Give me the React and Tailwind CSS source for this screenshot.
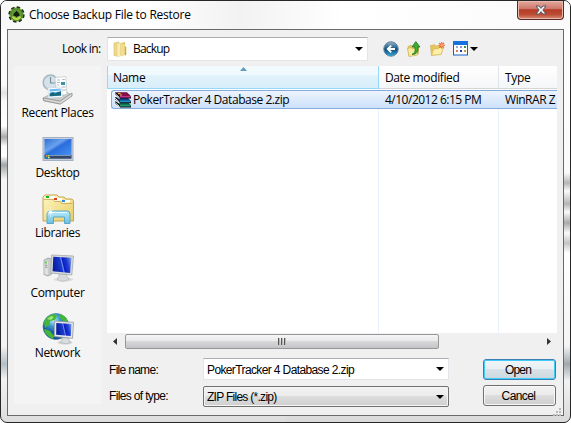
import React from "react";

const UI = "font-['Open_Sans','Noto_Sans',sans-serif]";
const SANS = "font-['Liberation_Sans',Arial,sans-serif]";

function AppIcon() {
  return (
    <svg width="17" height="17" viewBox="0 0 17 17">
      <circle cx="8.5" cy="8.5" r="7.3" fill="#8cc63f" />
      <circle cx="8.5" cy="8.5" r="7.3" fill="none" stroke="#24331f" strokeWidth="1.800" strokeDasharray="3.4 2.333" />
      <circle cx="8.5" cy="8.5" r="5.8" fill="#5f9a34" stroke="#35512a" strokeWidth=".6" />
      <path d="M3.600 10.500a5.200 5.200 0 0 0 9.800 0z" fill="#b5e04a" />
      <path d="M8.500 4.500C7.700 6.200 5.400 7 5.400 8.900c0 1.500 1.700 1.700 2.500.8L7.300 11.500h2.400l-.6-1.800c.8.900 2.500.7 2.500-.8C11.600 7 9.300 6.200 8.500 4.500z" fill="#14200e" />
    </svg>
  );
}

function FolderIcon() {
  return (
    <svg width="14" height="17" viewBox="0 0 14 17">
      <path d="M1 2l5-1v14.500l-5-1z" fill="#edd88a" stroke="#d8c06a" strokeWidth=".6" />
      <path d="M6 2.500l6-1.500v13l-6 1z" fill="#e3c765" />
      <path d="M4.500 3l3-1v13.500l-3 .5z" fill="#f8ebb4" />
      <path d="M8 3h3.500v11L8 15.500z" fill="#f1dc91" />
      <path d="M12 5l1.300 1v8l-1.300.5z" fill="#d1ae4c" />
      <path d="M12 11h1v2.500h-1z" fill="#6fb5d6" />
    </svg>
  );
}

function BackIcon() {
  return (
    <svg width="16" height="16" viewBox="0 0 16 16">
      <defs>
        <linearGradient id="back" x1="0" y1="0" x2="0" y2="1">
          <stop offset="0" stopColor="#9fb6c6" />
          <stop offset=".4" stopColor="#28668f" />
          <stop offset=".55" stopColor="#134f80" />
          <stop offset="1" stopColor="#31aee2" />
        </linearGradient>
      </defs>
      <circle cx="8" cy="8" r="7.200" fill="url(#back)" stroke="#5b7f9d" strokeWidth="1" />
      <path d="M12 8H5M8.200 4.600L4.800 8l3.400 3.400" fill="none" stroke="#fff" strokeWidth="1.900" />
    </svg>
  );
}

function UpIcon() {
  return (
    <svg width="16" height="16" viewBox="0 0 16 16">
      <path d="M2 5.500l3-1.300 1 1 6.500-.7v8l-9.500 2.500z" fill="#e9cd6a" stroke="#c3a040" strokeWidth=".6" />
      <path d="M1.500 7.500L5 6.700l1.500 1 5.500-.7-.5 7L3 15.500z" fill="#fbeb9e" stroke="#d0ae48" strokeWidth=".7" />
      <path d="M6 13.300c3-.9 3.300-3.800 3-7.300H6L9.800.600 14 6h-2.200c.6 4.600-1 7.600-5.800 7.300z" fill="#3fae33" stroke="#1c7424" strokeWidth=".8" />
    </svg>
  );
}

function NewFolderIcon() {
  return (
    <svg width="17" height="16" viewBox="0 0 17 16">
      <path d="M1.500 4.500l4-.8 1.300 1.300 5.200-.5.500 8-10 1.800z" fill="#e6c861" stroke="#cda945" strokeWidth=".6" />
      <path d="M2.500 14.300L4.500 8l5-.5 1-1 4 .4-2.500 6.600z" fill="#fdf0ac" stroke="#d8b44c" strokeWidth=".8" />
      <path d="M12.700 1v6.600M9.400 4.300H16M10.300 2l4.700 4.700M15 2l-4.700 4.700" stroke="#ee5f38" strokeWidth="1.100" />
      <circle cx="12.700" cy="4.300" r="1.300" fill="#ffae5f" />
    </svg>
  );
}

function ViewIcon() {
  return (
    <svg width="15" height="15" viewBox="0 0 15 15">
      <rect x=".5" y=".5" width="14" height="13.500" fill="#fff" stroke="#0f62c8" />
      <rect width="15" height="4" fill="#1670dd" />
      <path d="M3 5h2v2H3z" fill="#a8a9bd" />
      <path d="M7 5h2v2H7z" fill="#8d91cf" />
      <path d="M11 5h2v2h-2z" fill="#3a8f4c" />
      <path d="M3 9h2v2H3z" fill="#e57757" />
      <path d="M7 9h2v2H7z" fill="#1d3c9e" />
      <path d="M11 9h2v2h-2z" fill="#c09a3c" />
    </svg>
  );
}

function Book({ y, fill, shine }) {
  return (
    <g transform={`translate(0 ${y})`}>
      <path d="M0 0h12l4 4v2H5L0 2z" fill="#120f16" />
      <path d="M1 0h11l3.500 3.500H5z" fill={fill} />
      <path d="M5 3.300h10.500v1.700H5z" fill={shine} />
      <path d="M0 1l4.500 4M0 3l4.500 3" stroke="#f4f4f4" strokeWidth="1" />
    </g>
  );
}

function RarIcon() {
  return (
    <svg width="16" height="16" viewBox="0 0 16 16" className="shrink-0">
      <Book y={9.500} fill="#0c6b4e" shine="#1c9a6e" />
      <Book y={5.200} fill="#12408f" shine="#2196c4" />
      <Book y={.6} fill="#860f48" shine="#c8328a" />
      <path d="M3 1h2.500v1H3zM5 2.500h2v1H5z" fill="#e5cf3b" />
    </svg>
  );
}

function Defs() {
  return (
    <defs>
      <linearGradient id="screen" x1="0" y1=".2" x2="1" y2="0">
        <stop offset="0" stopColor="#0a1fa0" />
        <stop offset=".38" stopColor="#1b3bd0" />
        <stop offset=".44" stopColor="#6f93f0" />
        <stop offset=".5" stopColor="#0a1cc0" />
        <stop offset=".72" stopColor="#1f3fd2" />
        <stop offset="1" stopColor="#86a9f2" />
      </linearGradient>
      <linearGradient id="desk" x1="0" y1="0" x2="1" y2="1">
        <stop offset="0" stopColor="#2f6fd4" />
        <stop offset=".38" stopColor="#6ba2ee" />
        <stop offset=".5" stopColor="#2a6cdc" />
        <stop offset="1" stopColor="#4a94f4" />
      </linearGradient>
      <linearGradient id="lib" x1="0" y1="0" x2="1" y2="1">
        <stop offset="0" stopColor="#fff7c5" />
        <stop offset="1" stopColor="#e8ce61" />
      </linearGradient>
      <linearGradient id="glass" x1="0" y1="0" x2="0" y2="1">
        <stop offset="0" stopColor="#b9ecfb" />
        <stop offset="1" stopColor="#6bbfe4" />
      </linearGradient>
      <radialGradient id="globe" cx=".4" cy=".25">
        <stop offset="0" stopColor="#c7f3ff" />
        <stop offset=".5" stopColor="#3a99cf" />
        <stop offset="1" stopColor="#174f9b" />
      </radialGradient>
    </defs>
  );
}

function RecentIcon() {
  return (
    <svg width="32" height="32" viewBox="0 0 32 32">
      <path d="M1 25l17-9 12 6-12 9-16-3z" fill="#c9cbcb" stroke="#a5a5a5" strokeWidth=".6" />
      <circle cx="8.500" cy="9.500" r="7.300" fill="#d6e2ea" stroke="#a9bac5" strokeWidth="1.700" />
      <path d="M8.500 4v6h5" fill="none" stroke="#7a8e9f" strokeWidth="1.200" />
      <path d="M13 4.500l11-1 .8 18-10 1z" fill="#fcfdfd" stroke="#c4c8ca" strokeWidth=".7" />
      <path d="M15 7h3M20 6.500h3M15 9.500h3M15 12h2M20 14h3.500M20 17h4" stroke="#a0adb8" strokeWidth=".8" />
      <path d="M19 9h4v3h-4z" fill="#3b94a6" />
      <path d="M6 15l13.500-1 .8 10L6.500 25z" fill="#fff" stroke="#c5d4de" strokeWidth=".6" />
      <path d="M7.500 16.300l11-.8.6 7.200-11.300.7z" fill="#6fbbf2" />
      <path d="M7.600 21l3-2.500 2.500 2 5.800-3 .1 5-11.300.8z" fill="#16667c" />
      <path d="M7.500 19l11-1" stroke="#edf8ff" />
      <path d="M1 25l17 3.200L30 20v3L18.500 31 1.500 27.500z" fill="#dcdcdb" stroke="#8c8c8c" strokeWidth=".8" />
    </svg>
  );
}

function DesktopIcon() {
  return (
    <svg width="32" height="32" viewBox="0 0 32 32">
      <rect x="1" y="4.500" width="30" height="23" fill="#c3cddc" stroke="#a4b0c2" />
      <rect x="2.500" y="6" width="27" height="17" fill="url(#desk)" />
      <rect x="2.500" y="22" width="27" height="3.700" fill="#33476a" />
      <path d="M8 22.500h21" stroke="#8297b2" />
      <circle cx="5.500" cy="23.500" r="2.800" fill="#2879a5" />
      <path d="M4 22h1.500v1.500H4z" fill="#ef8a4a" />
      <path d="M6 22h1.500v1.500H6z" fill="#a9dd59" />
      <path d="M6 24h1.500v1.300H6z" fill="#ffe568" />
    </svg>
  );
}

function LibrariesIcon() {
  return (
    <svg width="32" height="32" viewBox="0 0 32 32">
      <path d="M1 28V4l2-2h12l2 2h5l2 2h6l1.500 2v20z" fill="url(#lib)" stroke="#c3a552" />
      <path d="M1.500 6.500h10l1 2h6l1 2h11" fill="none" stroke="#c4a64e" strokeWidth=".8" />
      <path d="M4 3h9v2.500H4zM12 5h8v2.500h-8zM20 7h8v2.500h-8z" fill="#fff" />
      <path d="M4 3h3v2H4z" fill="#08b72d" />
      <path d="M12 5h3v2h-3z" fill="#da4226" />
      <path d="M20 7h3v2h-3z" fill="#248fe5" />
      <path d="M5 30.500V21q0-3 3-3h17q3 0 3 3v9.500h-5.500V24h-11v6.500z" fill="url(#glass)" stroke="#58a8cb" />
      <path d="M7 19.500h18" stroke="#e4faff" />
      <path d="M8.500 14v10M3.500 19h10M5.500 16l6 6M11.500 16l-6 6" stroke="#fff" strokeWidth=".8" opacity=".6" />
      <circle cx="8.500" cy="19" r="1.600" fill="#fff" />
    </svg>
  );
}

function ComputerIcon() {
  return (
    <svg width="32" height="32" viewBox="0 0 32 32">
      <path d="M2 7l4-2 4 1v15l-4 2-4-1.500z" fill="#c7cbcb" stroke="#929898" strokeWidth=".7" />
      <path d="M2.500 7.500l3.500.8v13.700l-3.500-1z" fill="#dfe1e0" />
      <path d="M3 12l2.500.5M3 14l2.500.5" stroke="#798181" strokeWidth=".8" />
      <path d="M2.800 8.500h2v2h-2z" fill="#56cb3c" />
      <ellipse cx="21.500" cy="26.500" rx="10" ry="2.200" fill="#dedede" />
      <path d="M17 21h8v3l2.500 2q-7 4.500-12.500 0l2-2z" fill="#d8dadb" stroke="#b5b8ba" strokeWidth=".7" />
      <path d="M9.500 2l22 1-1.700 19-21-2z" fill="#d8dbdc" stroke="#a3a8ab" strokeWidth=".8" />
      <path d="M11.300 3.800l18.200.9-1.400 15.200-17.500-1.600z" fill="url(#screen)" />
    </svg>
  );
}

function NetworkIcon() {
  return (
    <svg width="32" height="32" viewBox="0 0 32 32">
      <circle cx="14" cy="13.500" r="13" fill="url(#globe)" stroke="#437b93" strokeWidth=".7" />
      <path d="M2 9Q5 2 12 1l3 2-2 4-5 1-1 4-4 3zM3 16l5 2 4 5-1 3Q4 23 2 17zM17 1q7 1 9 8l-5-1-4-4z" fill="#43b838" />
      <path d="M5 6l4-3 3 1-3 3z" fill="#a4e373" />
      <ellipse cx="23" cy="29.500" rx="7.500" ry="2" fill="#d8d8d8" />
      <path d="M20 25h7v3l2 1.500q-5 2.500-11 0l2-1.500z" fill="#dadcdd" stroke="#b0b4b6" strokeWidth=".7" />
      <path d="M12.500 8l19 1.300-1 16-18.300-1.800z" fill="#e4e7e8" stroke="#91999d" strokeWidth=".8" />
      <path d="M14.300 10l15.200 1-.7 12-14.600-1.300z" fill="url(#screen)" />
    </svg>
  );
}

function Triangle() {
  return (
    <svg width="8" height="4" viewBox="0 0 8 4" className="shrink-0">
      <path d="M0 0h8L4 4z" fill="#000" />
    </svg>
  );
}

function Place({ icon, label, track }) {
  return (
    <div className="flex h-[60px] flex-col items-center">
      {icon}
      <span className={`whitespace-nowrap text-[12px] leading-[16px] ${track}`}>{label}</span>
    </div>
  );
}

function Places() {
  return (
    <aside className={`h-[338px] w-[87px] shrink-0 bg-[#f4f4f4] pt-[7px] ${UI}`}>
      <Place icon={<RecentIcon />} label="Recent Places" track="tracking-[-0.33px]" />
      <Place icon={<DesktopIcon />} label="Desktop" track="tracking-[-0.3px]" />
      <Place icon={<LibrariesIcon />} label="Libraries" track="tracking-[-0.4px]" />
      <Place icon={<ComputerIcon />} label="Computer" track="tracking-[-0.3px]" />
      <Place icon={<NetworkIcon />} label="Network" track="tracking-[-0.3px]" />
    </aside>
  );
}

function FileList() {
  return (
    <div className={`flex h-[283px] w-[450px] flex-col overflow-hidden bg-white text-[12px] ${UI}`}>
      <div className="flex h-[23px] shrink-0 leading-[23px]">
        <div className="relative w-[272px] shrink-0 border-x border-b border-[#96d9f9] bg-[linear-gradient(#f2fafd_0%,#f0f9fd_40%,#e1f3fb_41%,#d7eefa_100%)] pl-[5px]">
          <span className="tracking-[-0.3px]">Name</span>
          <svg className="absolute left-[132px] top-px" width="7" height="4" viewBox="0 0 7 4">
            <path d="M3.500 0L7 4H0z" fill="#5f9dbd" />
          </svg>
        </div>
        <div className="w-[120px] shrink-0 border-b border-r border-b-[#d5d5d5] border-r-[#dfe4ea] bg-gradient-to-b from-white to-[#f5f6f8] pl-[6px]">
          <span className="tracking-[-0.38px]">Date modified</span>
        </div>
        <div className="grow border-b border-[#d5d5d5] bg-gradient-to-b from-white to-[#f5f6f8] pl-[6px]">
          <span className="tracking-[-0.3px]">Type</span>
        </div>
      </div>
      <div className="flex grow bg-[linear-gradient(90deg,transparent_271px,#e8f1fb_271px,#e8f1fb_272px,transparent_272px,transparent_391px,#e8f1fb_391px,#e8f1fb_392px,transparent_392px)] pt-px">
        <div className="ml-1 flex h-[19px] w-[446px] shrink-0 items-center rounded-l-[3px] border border-r-0 border-[#84acdd] bg-gradient-to-b from-[#edf4fd] to-[#cde1fa] pl-[3px] leading-[17px]">
          <RarIcon />
          <span className="ml-[2px] w-[252px] shrink-0 whitespace-nowrap tracking-[-0.45px]">PokerTracker 4 Database 2.zip</span>
          <span className="w-[120px] shrink-0 whitespace-nowrap tracking-[-0.5px]">4/10/2012 6:15 PM</span>
          <span className="shrink-0 whitespace-nowrap tracking-[-0.45px]">WinRAR Z</span>
        </div>
      </div>
      <div className="flex h-4 shrink-0 items-center bg-[#f0f0f0] pl-[6px]">
        <svg width="4" height="7" viewBox="0 0 4 7"><path d="M4 0v7L0 3.500z" fill="#333" /></svg>
        <div className="ml-2 flex h-[15px] w-[314px] items-center justify-center rounded-[2px] border border-[#979797] bg-[linear-gradient(#f5f5f5_0%,#e9e9eb_46%,#d8d8da_50%,#c4c4c7_100%)]">
          <div className="flex gap-px">
            <i className="h-[7px] w-[2px] border-l border-[#555] bg-[#bbb]" />
            <i className="h-[7px] w-[2px] border-l border-[#555] bg-[#bbb]" />
            <i className="h-[7px] w-[2px] border-l border-[#555] bg-[#bbb]" />
          </div>
        </div>
        <svg className="ml-[108px]" width="4" height="7" viewBox="0 0 4 7"><path d="M0 0v7l4-3.500z" fill="#333" /></svg>
      </div>
    </div>
  );
}

function Form() {
  return (
    <div className={`mt-[9px] flex w-[450px] text-[12px] ${SANS}`}>
      <div className="flex w-[96px] flex-col pl-[2px]">
        <label className="h-[27px] whitespace-nowrap leading-[25px] tracking-[-0.7px]">File name:</label>
        <label className="h-[23px] whitespace-nowrap leading-[23px] tracking-[-0.65px]">Files of type:</label>
      </div>
      <div className="flex w-[246px] flex-col gap-[6px]">
        <div className="flex h-[22px] items-center justify-between border border-[#e3e5eb] border-t-[#abadb3] bg-white pl-[3px] pr-[4px]">
          <span className="whitespace-nowrap pt-px tracking-[-0.62px]">PokerTracker 4 Database 2.zip</span>
          <Triangle />
        </div>
        <div className="flex h-[21px] items-center justify-between rounded-[2px] border border-[#707070] bg-[linear-gradient(#f2f2f2_0%,#ebebeb_48%,#dddddd_50%,#cfcfcf_100%)] pl-[3px] pr-[4px] shadow-[inset_0_0_0_1px_#f5f5f5]">
          <span className="whitespace-nowrap tracking-[-0.72px]">ZIP Files (*.zip)</span>
          <Triangle />
        </div>
      </div>
      <div className="ml-[34px] flex w-[73px] flex-col gap-[5px] pt-px">
        <button className="h-[21px] rounded-[3px] border border-[#3c7fb1] bg-[linear-gradient(#f1f5f7_0%,#e9eff2_48%,#d9e3e8_50%,#cbd8df_100%)] pr-[3px] leading-[20px] tracking-[-0.8px] shadow-[inset_0_0_0_1px_#3fcbf7]">Open</button>
        <button className="h-[21px] rounded-[3px] border border-[#707070] bg-[linear-gradient(#f2f2f2_0%,#ebebeb_48%,#dddddd_50%,#cfcfcf_100%)] pr-[2px] leading-[20px] tracking-[-0.6px] shadow-[inset_0_0_0_1px_#f8f8f8]">Cancel</button>
      </div>
    </div>
  );
}

export default function App() {
  return (
    <div className="h-[423px] w-[571px] bg-white text-black">
      <svg width="0" height="0" className="absolute"><Defs /></svg>
      <div className="flex h-[423px] w-[571px] flex-col overflow-hidden rounded-[7px] border border-[#252729] bg-[linear-gradient(#fff_0px,#fafafa_84px,#e2e2e2_92px,#fafafa_100px,#fff_125px,#a9a9a9_136px,#fafafa_145px,#fff_155px,#a2a4a6_164px,#f5f5f5_178px,#f4f4f4_345px,#b4bec6_363px,#f2f2f2_378px,#dcdcdc_423px),linear-gradient(#fff_0px,#fafafa_172px,#b5b5b5_182px,#fafafa_190px,#b5b5b5_203px,#fafafa_211px,#a9a9a9_222px,#fafafa_232px,#c4c4c4_242px,#fff_252px,#f4f4f4_345px,#a0a8ae_363px,#f2f2f2_380px,#d8d8d8_423px)] bg-[length:50%_100%,100%_100%] bg-[position:0_0,0_0] bg-no-repeat px-[6px]">
        <header className="-mx-[6px] flex h-[28px] shrink-0 bg-[linear-gradient(90deg,#f8f8f8,#fff_25%,#f2f2f2_42%,#fff_60%,#fafafa)] pl-[7px]">
          <div className="pt-[5px]"><AppIcon /></div>
          <h1 className={`ml-[4px] whitespace-nowrap text-[12px] leading-[28px] tracking-[-0.25px] ${UI}`}>Choose Backup File to Restore</h1>
          <button className="ml-auto mr-[6px] flex h-[19px] w-[47px] items-center justify-center rounded-b-[4px] border border-t-0 border-[#592727] bg-[linear-gradient(#e3aaa0_0%,#cd7567_45%,#b53a25_48%,#bd4c35_75%,#d98e73_100%)] shadow-[inset_0_0_0_1px_#eab9ad]">
            <svg width="12" height="10" viewBox="0 0 12 10">
              <path d="M1 1h3l2 2.400L8 1h3L7.800 5 11 9H8L6 6.600 4 9H1l3.200-4z" fill="#fff" stroke="#535465" strokeWidth="1" />
            </svg>
          </button>
        </header>
        <main className="h-[387px] w-[557px] shrink-0 border border-[#67696b] bg-[#f0f0f0]">
          <div className="flex h-[36px] pt-[7px]">
            <span className={`w-[99px] shrink-0 pl-[54px] text-[12px] leading-[23px] tracking-[-0.65px] ${UI}`}>Look in:</span>
            <div className="flex h-[24px] w-[261px] items-center border border-[#e3e5eb] border-t-[#abadb3] bg-white pl-[5px] pr-[4px]">
              <FolderIcon />
              <span className={`ml-[6px] grow text-[12px] tracking-[-0.8px] ${UI}`}>Backup</span>
              <Triangle />
            </div>
            <div className="ml-[15px] flex h-[23px] items-center">
              <BackIcon />
              <div className="ml-[7px]"><UpIcon /></div>
              <div className="ml-[7px]"><NewFolderIcon /></div>
              <div className="ml-[7px]"><ViewIcon /></div>
              <div className="ml-[2px]"><Triangle /></div>
            </div>
          </div>
          <div className="flex pl-[6px]">
            <Places />
            <section className="ml-[6px]">
              <FileList />
              <Form />
            </section>
          </div>
          <svg className="ml-auto mr-[2px]" width="9" height="9" viewBox="0 0 9 9">
            <path d="M7 0h2v2H7zM4 3h2v2H4zM7 3h2v2H7zM1 6h2v2H1zM4 6h2v2H4zM7 6h2v2H7z" fill="#b8b8b8" />
          </svg>
        </main>
      </div>
    </div>
  );
}
